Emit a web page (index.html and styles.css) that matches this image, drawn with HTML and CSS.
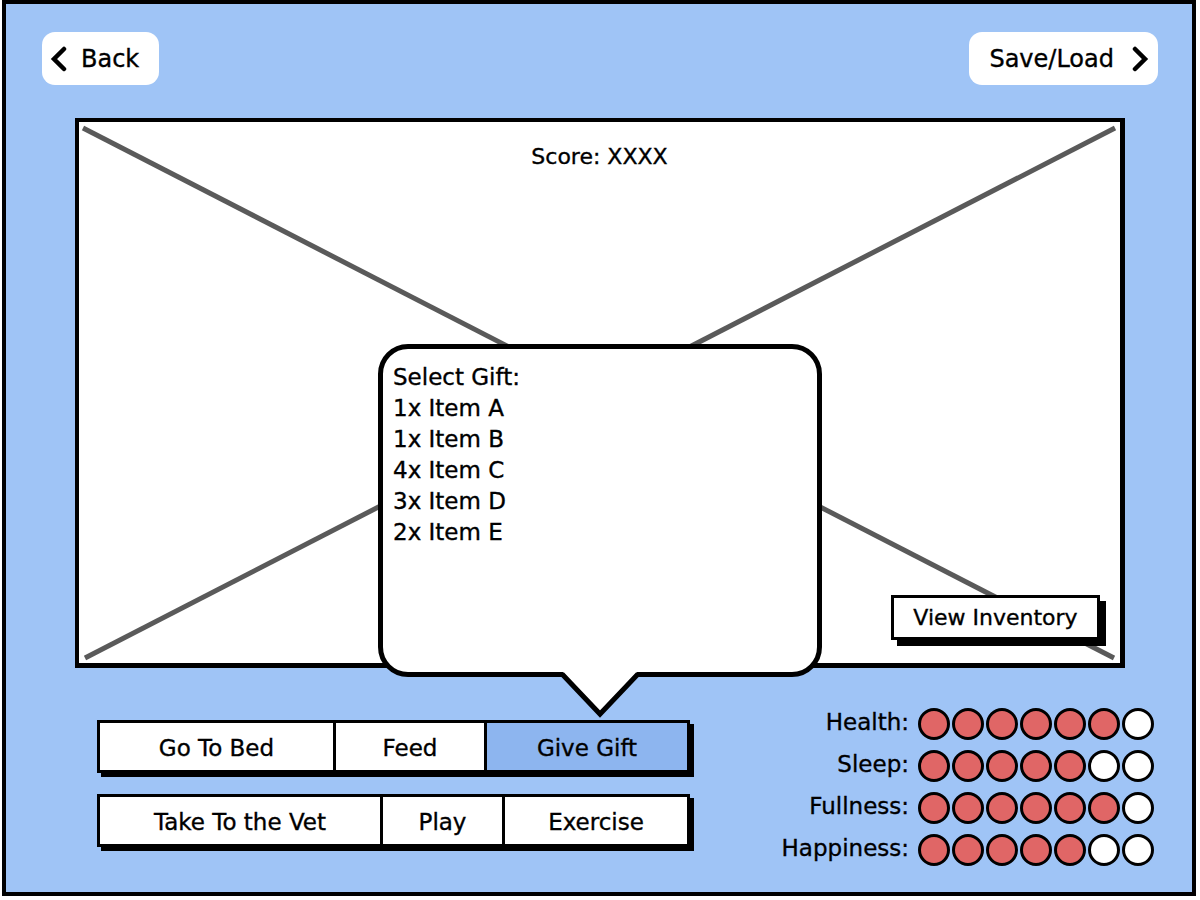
FILE: index.html
```html
<!DOCTYPE html>
<html lang="en">
<head>
  <meta charset="UTF-8" />
  <meta name="viewport" content="width=device-width, initial-scale=1.0"/>
  <title>Pet Care - Give Gift</title>
  <link rel="stylesheet" href="styles.css">
</head>
<body>
  <div class="frame">
    <div class="topbar">
      <a href="#" class="nav-btn back-btn">
        <svg class="chev" width="18" height="26" viewBox="0 0 18 26"><polyline points="14,3 4,13 14,23" /></svg>
        <span>Back</span>
      </a>
      <a href="#" class="nav-btn save-btn">
        <span>Save/Load</span>
        <svg class="chev" width="18" height="26" viewBox="0 0 18 26"><polyline points="4,3 14,13 4,23" /></svg>
      </a>
    </div>

    <div class="stage">
      <svg class="placeholder" viewBox="0 0 1042 542" preserveAspectRatio="none">
        <line x1="4" y1="6" x2="1036" y2="537" />
        <line x1="1037" y1="6" x2="6" y2="537" />
      </svg>
      <p class="score">Score: XXXX</p>

      <div class="gift-popup">
        <p>Select Gift:</p>
        <p>1x Item A</p>
        <p>1x Item B</p>
        <p>4x Item C</p>
        <p>3x Item D</p>
        <p>2x Item E</p>
        <svg class="tail" width="82" height="50" viewBox="0 0 82 50">
          <polygon points="2,0 41,43 80,0" />
          <polyline points="3,4 41,44 79,4" />
        </svg>
      </div>

      <div class="inventory-btn">View Inventory</div>
    </div>

    <div class="bottom">
      <div class="actions">
        <div class="action-bar">
          <div class="action bed">Go To Bed</div>
          <div class="action feed">Feed</div>
          <div class="action gift active">Give Gift</div>
        </div>
        <div class="action-bar">
          <div class="action vet">Take To the Vet</div>
          <div class="action play">Play</div>
          <div class="action exercise">Exercise</div>
        </div>
      </div>

      <div class="stats">
        <div class="stat-row">
          <span class="stat-label">Health:</span>
          <span class="dots"><i class="dot on"></i><i class="dot on"></i><i class="dot on"></i><i class="dot on"></i><i class="dot on"></i><i class="dot on"></i><i class="dot"></i></span>
        </div>
        <div class="stat-row">
          <span class="stat-label">Sleep:</span>
          <span class="dots"><i class="dot on"></i><i class="dot on"></i><i class="dot on"></i><i class="dot on"></i><i class="dot on"></i><i class="dot"></i><i class="dot"></i></span>
        </div>
        <div class="stat-row">
          <span class="stat-label">Fullness:</span>
          <span class="dots"><i class="dot on"></i><i class="dot on"></i><i class="dot on"></i><i class="dot on"></i><i class="dot on"></i><i class="dot on"></i><i class="dot"></i></span>
        </div>
        <div class="stat-row">
          <span class="stat-label">Happiness:</span>
          <span class="dots"><i class="dot on"></i><i class="dot on"></i><i class="dot on"></i><i class="dot on"></i><i class="dot on"></i><i class="dot"></i><i class="dot"></i></span>
        </div>
      </div>
    </div>
  </div>
</body>
</html>
```

FILE: styles.css
```css
body { margin: 0; background: #fff; font-family: "DejaVu Sans", sans-serif; color: #000; -webkit-text-stroke: 0.35px #000; }
p { margin: 0; }

.frame { box-sizing: border-box; width: 1194px; height: 896px; margin-left: 2px; border: 4px solid #000; background: #9fc4f6; }

.topbar { display: flex; justify-content: space-between; padding: 28px 34px 0 36px; }
.nav-btn { display: flex; align-items: center; height: 53px; box-sizing: border-box; background: #fff; border-radius: 13px; color: #000; text-decoration: none; font-size: 24px; }
.back-btn { padding: 0 20px 0 8px; gap: 13px; }
.save-btn { padding: 0 9px 0 20px; gap: 17px; }
.chev { display: block; }
.chev polyline { fill: none; stroke: #000; stroke-width: 4.5; stroke-linecap: round; stroke-linejoin: miter; }

.stage { position: relative; box-sizing: border-box; width: 1050px; height: 550px; margin: 33px 0 0 69px; border: 4px solid #000; border-right-width: 5px; border-bottom-width: 5px; background: #fff; }
.placeholder { position: absolute; left: 0; top: 0; width: 100%; height: 100%; }
.placeholder line { stroke: #5a5a5a; stroke-width: 5; }
.score { position: relative; padding-top: 20px; text-align: center; font-size: 22px; line-height: 30px; }

.gift-popup { position: absolute; left: 299px; top: 222px; box-sizing: border-box; width: 444px; height: 333px; padding: 13px 10px; border: 5px solid #000; border-radius: 30px; background: #fff; font-size: 23px; line-height: 31px; }
.tail { position: absolute; left: 176px; top: 321px; }
.tail polygon { fill: #fff; }
.tail polyline { fill: none; stroke: #000; stroke-width: 5; stroke-linejoin: miter; }

.inventory-btn { position: absolute; right: 20px; bottom: 23px; box-sizing: border-box; width: 209px; height: 45px; border: 3.5px solid #000; background: #fff; box-shadow: 6px 6px 0 #000; font-size: 22px; line-height: 39px; text-align: center; }

.bottom { display: flex; justify-content: space-between; align-items: flex-start; padding: 40px 38px 0 91px; }
.actions { display: flex; flex-direction: column; gap: 21px; margin-top: 12px; }
.action-bar { display: flex; box-sizing: border-box; width: 593px; height: 53px; border: 3px solid #000; background: #fff; box-shadow: 4px 4px 0 #000; }
.action { box-sizing: border-box; padding-top: 4px; font-size: 23px; line-height: 43px; text-align: center; }
.action + .action { border-left: 3px solid #000; }
.bed { width: 233px; }
.feed { width: 151px; }
.vet { width: 280px; }
.play { width: 122px; }
.gift, .exercise { flex: 1; }
.active { background: #8db5ef; }

.stats { display: flex; flex-direction: column; gap: 10px; }
.stat-row { display: flex; align-items: center; gap: 9px; }
.stat-label { width: 128px; padding-bottom: 3px; text-align: right; font-size: 23px; line-height: 29px; }
.dots { display: flex; gap: 2px; }
.dot { display: block; box-sizing: border-box; width: 32px; height: 32px; border: 3.5px solid #000; border-radius: 50%; background: #fff; }
.dot.on { background: #e06666; }
```
